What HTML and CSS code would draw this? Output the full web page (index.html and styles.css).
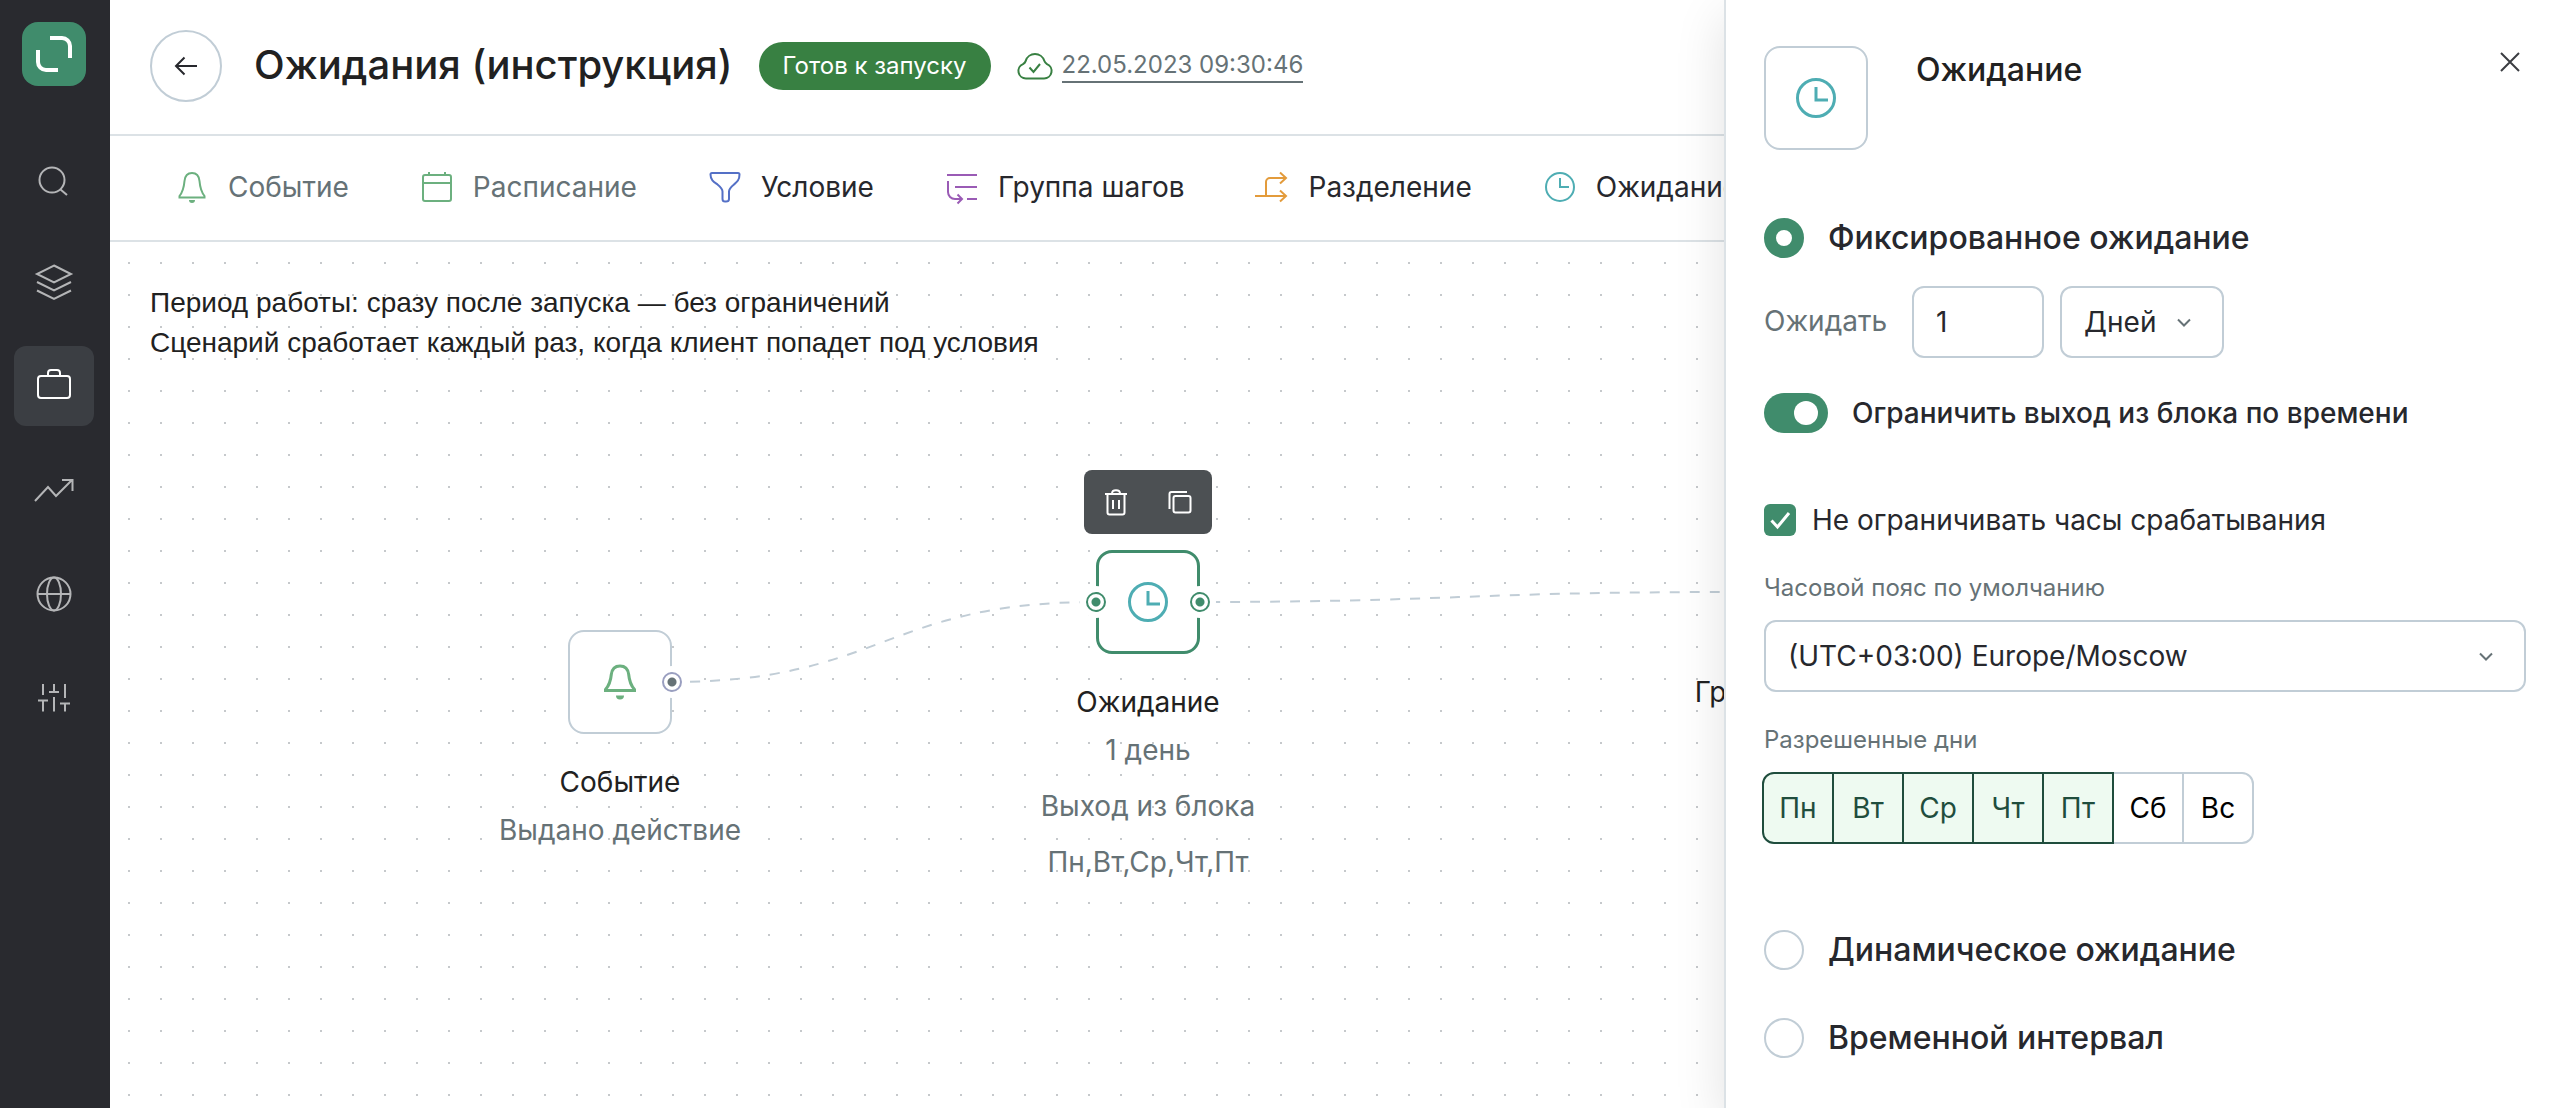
FILE: index.html
```html
<!DOCTYPE html>
<html lang="ru">
<head>
<meta charset="utf-8">
<title>Ожидания (инструкция)</title>
<link rel="stylesheet" href="styles.css">
</head>
<body>
<div class="app">
  <nav class="sidebar" aria-label="Главное меню">
    <a class="logo" href="#" aria-label="Главная">
      <svg width="64" height="64" viewBox="0 0 64 64" fill="none" stroke="currentColor" stroke-width="4"><path d="M28 16h12a8 8 0 0 1 8 8v12M16 28v12a8 8 0 0 0 8 8h12"/></svg>
    </a>
    <a class="nav-item" href="#" aria-label="Поиск">
      <svg class="nav-icon" viewBox="0 0 40 40"><circle cx="18" cy="22" r="12.5"/><path d="M26.500 31.500L33 37"/></svg>
    </a>
    <a class="nav-item" href="#" aria-label="Слои">
      <svg class="nav-icon" viewBox="0 0 40 40"><path d="M20 3.500L37 12L20 20.500L3 12ZM3 20L20 28.500L37 20M3 28.500L20 37L37 28.500"/></svg>
    </a>
    <a class="nav-item nav-item-active" href="#" aria-label="Кампании">
      <svg class="nav-icon" viewBox="0 0 40 40"><rect x="4" y="10" width="32" height="22" rx="3"/><path d="M14 10V7a3 3 0 0 1 3-3h6a3 3 0 0 1 3 3v3"/></svg>
    </a>
    <a class="nav-item" href="#" aria-label="Аналитика">
      <svg class="nav-icon" viewBox="0 0 40 40"><path d="M1 31L14 17L22 26L38 10M28 10h10.500v11"/></svg>
    </a>
    <a class="nav-item" href="#" aria-label="Сайт">
      <svg class="nav-icon" viewBox="0 0 40 40"><circle cx="20" cy="20" r="16.500"/><ellipse cx="20" cy="20" rx="7" ry="16.500"/><path d="M3.500 20h33"/></svg>
    </a>
    <a class="nav-item" href="#" aria-label="Настройки">
      <svg class="nav-icon" viewBox="0 0 40 40"><path d="M9 6v11M9 22.500v11M4 22.500h10M20 6v8M20 19v14.500M15 14h10M31 6v14M31 25.500v8M26 25.500h10"/></svg>
    </a>
  </nav>

  <main class="workspace">
    <header class="topbar">
      <button class="back" type="button" aria-label="Назад">
        <svg width="24" height="24" viewBox="0 0 24 24"><path d="M23 12H2M10.500 3.500L2 12L10.500 20.500"/></svg>
      </button>
      <h1 class="title">Ожидания (инструкция)</h1>
      <span class="status">Готов к запуску</span>
      <a class="saved" href="#">
        <svg width="36" height="32" viewBox="0 0 36 32"><path d="M9 28.500h18a7.500 7.500 0 0 0 3-14.400c-1.500-1-2.200-1.600-2.600-3a9.800 9.800 0 0 0-18.800 0c-.4 1.400-1 2-2.600 3A7.500 7.500 0 0 0 9 28.500z"/><path d="M12.500 17.500l4 4.500l6.500-8"/></svg>
        <time class="saved-time">22.05.2023 09:30:46</time>
      </a>
    </header>

    <div class="palette">
      <button class="block block-muted" type="button">
        <svg class="icon-green" viewBox="0 0 32 32"><path d="M16 2c5 0 7 3 7.500 8 .5 6 1 10 5 15v1.500h-25V25c4-5 4.500-9 5-15C9 5 11 2 16 2z"/><path class="solid" d="M13 29h6a3 3 0 0 1-6 0z"/></svg>
        Событие
      </button>
      <button class="block block-muted" type="button">
        <svg class="icon-green" viewBox="0 0 32 32"><rect x="2" y="4" width="28" height="26" rx="2"/><path d="M2 12h28M8 1v3M24 1v3"/></svg>
        Расписание
      </button>
      <button class="block" type="button">
        <svg class="icon-blue" viewBox="0 0 32 32"><path d="M3 2h26a1.500 1.500 0 0 1 1.500 1.500C30.500 9 28 11 25 13.500c-3 2.500-5 4.500-5 7V28c0 1.500-1.500 2.500-3 2.500h-1c-1.500 0-2.500-1-2.500-2.500v-7.500c0-2.500-2-4.500-5-7C5 11 1.500 9 1.500 3.500A1.500 1.500 0 0 1 3 2z"/></svg>
        Условие
      </button>
      <button class="block" type="button">
        <svg class="icon-purple" viewBox="0 0 32 32"><path d="M1 4h30M9 16h22M21 28h10M2 10v11a7 7 0 0 0 7 7h7M11.500 23.500L16 28l-4.500 4.500"/></svg>
        Группа шагов
      </button>
      <button class="block" type="button">
        <svg class="icon-orange" viewBox="0 0 32 32"><path d="M-2 25h31M9 25V11a4 4 0 0 1 4-4h16M23 1.500L29 7l-6 5.500M23 19.500L29 25l-6 5.500"/></svg>
        Разделение
      </button>
      <button class="block" type="button">
        <svg class="icon-teal" viewBox="0 0 32 32"><circle cx="16" cy="16" r="14"/><path d="M16 7v9h9"/></svg>
        Ожидание
      </button>
    </div>

    <section class="canvas">
      <p class="summary">Период работы: сразу после запуска — без ограничений<br>Сценарий сработает каждый раз, когда клиент попадет под условия</p>

      <svg class="links" width="1800" height="600" viewBox="0 0 1800 600"><path d="M560 440C772 440 774 360 986 360M1080 360C1350 360 1350 350 1626 350"/></svg>

      <article class="node node-event">
        <div class="node-box">
          <svg class="node-icon icon-green" viewBox="0 0 40 40"><path d="M20 4c5.500 0 8 3 8.700 8.500.6 6.500 1.800 10.500 5.800 15v1h-29v-1c4-4.500 5.200-8.500 5.800-15C12 7 14.500 4 20 4z"/><path class="solid" d="M16 33.500h8a4 4 0 0 1-8 0z"/></svg>
          <span class="port port-out"></span>
        </div>
        <h2 class="node-name">Событие</h2>
        <p class="node-note">Выдано действие</p>
      </article>

      <article class="node node-wait">
        <div class="node-tools">
          <button class="tool" type="button" aria-label="Удалить">
            <svg viewBox="0 0 32 32"><path d="M5 8h22M7.500 8v18.500a2 2 0 0 0 2 2h13a2 2 0 0 0 2-2V8M12 7.500c0-4.500 8-4.500 8 0M13 14v9M19 14v9"/></svg>
          </button>
          <button class="tool" type="button" aria-label="Копировать">
            <svg viewBox="0 0 32 32"><rect x="9.500" y="10" width="17" height="16.500" rx="2"/><path d="M5.500 23V8a2 2 0 0 1 2-2H23"/></svg>
          </button>
        </div>
        <div class="node-box node-box-active">
          <svg class="node-icon icon-teal" viewBox="0 0 40 40"><circle cx="20" cy="20" r="18.500"/><path d="M20 9v13h12"/></svg>
          <span class="port port-in port-active"></span>
          <span class="port port-out port-active"></span>
        </div>
        <h2 class="node-name">Ожидание</h2>
        <p class="node-note">1 день</p>
        <p class="node-note">Выход из блока</p>
        <p class="node-note">Пн,Вт,Ср,Чт,Пт</p>
      </article>

      <article class="node node-group">
        <div class="node-box">
          <svg class="node-icon icon-purple" viewBox="0 0 32 32"><path d="M1 4h30M9 16h22M21 28h10M2 10v11a7 7 0 0 0 7 7h7M11.500 23.500L16 28l-4.500 4.500"/></svg>
          <span class="port port-in"></span>
        </div>
        <h2 class="node-name">Группа шагов</h2>
      </article>
    </section>
  </main>

  <aside class="panel">
    <header class="panel-head">
      <div class="node-box">
        <svg class="node-icon icon-teal" viewBox="0 0 40 40"><circle cx="20" cy="20" r="18.500"/><path d="M20 9v13h12"/></svg>
      </div>
      <h2 class="panel-title">Ожидание</h2>
      <button class="close" type="button" aria-label="Закрыть">
        <svg width="20" height="20" viewBox="0 0 20 20"><path d="M1 1L19 19M19 1L1 19"/></svg>
      </button>
    </header>

    <form class="settings">
      <label class="choice"><input class="radio" type="radio" name="mode" checked>Фиксированное ожидание</label>

      <div class="wait-row">
        <label class="wait-label" for="amount">Ожидать</label>
        <input class="field amount" id="amount" type="text" value="1">
        <span class="select">
          <select class="field unit" aria-label="Единица времени"><option>Дней</option></select>
          <svg class="chevron" viewBox="0 0 16 10"><path d="M2 1.500l6 6l6-6"/></svg>
        </span>
      </div>

      <label class="limit"><input class="switch" type="checkbox" role="switch" checked>Ограничить выход из блока по времени</label>

      <label class="check-row">
        <span class="check-wrap"><input class="check" type="checkbox" checked><svg class="tick" viewBox="0 0 32 32"><path d="M7.500 16.500l6 6.500l11.500-14"/></svg></span>
        Не ограничивать часы срабатывания
      </label>

      <label class="caption" for="zone">Часовой пояс по умолчанию</label>
      <span class="select select-wide">
        <select class="field zone" id="zone"><option>(UTC+03:00) Europe/Moscow</option></select>
        <svg class="chevron" viewBox="0 0 16 10"><path d="M2 1.500l6 6l6-6"/></svg>
      </span>

      <fieldset class="days">
        <legend class="caption">Разрешенные дни</legend>
        <div class="day-list">
          <label class="day"><input class="day-input" type="checkbox" checked>Пн</label>
          <label class="day"><input class="day-input" type="checkbox" checked>Вт</label>
          <label class="day"><input class="day-input" type="checkbox" checked>Ср</label>
          <label class="day"><input class="day-input" type="checkbox" checked>Чт</label>
          <label class="day"><input class="day-input" type="checkbox" checked>Пт</label>
          <label class="day"><input class="day-input" type="checkbox">Сб</label>
          <label class="day"><input class="day-input" type="checkbox">Вс</label>
        </div>
      </fieldset>

      <label class="choice choice-next"><input class="radio" type="radio" name="mode">Динамическое ожидание</label>
      <label class="choice choice-next"><input class="radio" type="radio" name="mode">Временной интервал</label>
    </form>
  </aside>
</div>
</body>
</html>
```
FILE: styles.css
```css
:root {
  --green: #408c6c;
  --border: #c1cdd6;
  --line: #dce2e6;
  --text: #27282d;
  --muted: #667276;
}

* { box-sizing: border-box; }

body {
  margin: 0;
  font-family: Inter, "Liberation Sans", sans-serif;
  font-size: 28px;
  line-height: 40px;
  color: var(--text);
  background: #fff;
}

h1, h2, p { margin: 0; font-weight: 400; }
button, input, select { font: inherit; color: inherit; margin: 0; }
button { padding: 0; border: 0; background: none; cursor: pointer; }
svg { display: block; fill: none; stroke: currentColor; stroke-width: 2; overflow: visible; }
.solid { fill: currentColor; stroke: none; }

.icon-green { color: #6cb07f; }
.icon-blue { color: #5470c6; }
.icon-purple { color: #9a5bb5; }
.icon-orange { color: #e39b3b; }
.icon-teal { color: #4eadb3; }

.app {
  position: relative;
  display: flex;
  min-height: 100vh;
  overflow: hidden;
}

/* Sidebar */
.sidebar {
  flex: none;
  width: 110px;
  padding: 22px 16px 22px 14px;
  display: flex;
  flex-direction: column;
  align-items: center;
  gap: 24px;
  background: #292a2f;
}
.logo {
  margin-bottom: 28px;
  border-radius: 16px;
  background: var(--green);
  color: #fff;
}
.logo svg { stroke-width: 4; }
.nav-item {
  width: 80px;
  height: 80px;
  display: grid;
  place-items: center;
  border-radius: 12px;
  color: #b4b5b7;
}
.nav-item-active { background: #3b3e43; color: #fff; }
.nav-icon { width: 40px; height: 40px; }

/* Header */
.workspace {
  flex: 1;
  min-width: 0;
  display: flex;
  flex-direction: column;
}
.topbar {
  height: 136px;
  padding: 0 40px 2px;
  display: flex;
  align-items: center;
  border-bottom: 2px solid var(--line);
}
.back {
  flex: none;
  width: 72px;
  height: 72px;
  display: grid;
  place-items: center;
  border: 2px solid var(--border);
  border-radius: 50%;
}
.title {
  margin-left: 32px;
  padding-bottom: 2px;
  font-size: 40px;
  font-weight: 500;
  line-height: 48px;
  color: #212121;
}
.status {
  margin-left: 26px;
  padding: 4px 24px;
  border-radius: 24px;
  background: #388042;
  color: #fff;
  font-size: 24px;
}
.saved {
  margin-left: 26px;
  display: flex;
  align-items: center;
  gap: 9px;
  color: #388042;
  text-decoration: none;
}
.saved-time {
  border-bottom: 2px solid var(--muted);
  color: var(--muted);
  font-size: 24px;
  line-height: 32px;
}

/* Block palette */
.palette {
  height: 106px;
  padding: 0 66px 2px;
  display: flex;
  align-items: center;
  gap: 72px;
  border-bottom: 2px solid var(--line);
}
.block {
  flex: none;
  display: flex;
  align-items: center;
  gap: 20px;
}
.block svg { width: 32px; height: 32px; }
.block-muted { color: var(--muted); }

/* Canvas */
.canvas {
  position: relative;
  flex: 1;
  padding: 41px 40px;
  background-image: radial-gradient(circle, #c6c9cc 1px, transparent 1px);
  background-size: 32px 32px;
  background-position: 3px 5px;
}
.summary {
  font-family: "Liberation Sans", Arial, sans-serif;
  color: #212121;
}
.links {
  position: absolute;
  left: 0;
  top: 0;
  stroke: var(--border);
  stroke-dasharray: 10 10;
}
.node {
  position: absolute;
  width: 300px;
  display: flex;
  flex-direction: column;
  align-items: center;
  text-align: center;
}
.node-event { left: 360px; top: 388px; }
.node-wait { left: 888px; top: 228px; }
.node-group { left: 1528px; top: 298px; }
.node-box {
  position: relative;
  flex: none;
  width: 104px;
  height: 104px;
  display: grid;
  place-items: center;
  border: 2px solid var(--border);
  border-radius: 16px;
  background: #fff;
}
.node-box-active { border: 3px solid var(--green); }
.node-icon { width: 40px; height: 40px; stroke-width: 3; }
.port {
  position: absolute;
  top: 50%;
  width: 20px;
  height: 20px;
  margin: -10px;
  border: 2px solid #9a9fc0;
  border-radius: 50%;
  background: radial-gradient(circle, var(--muted) 4px, #fff 5px);
  box-shadow: 0 0 0 6px #fff;
}
.port-in { left: -2px; }
.port-out { right: -2px; }
.port-active {
  border-color: var(--green);
  background: radial-gradient(circle, var(--green) 4px, #fff 5px);
}
.port-in.port-active { left: -3px; }
.port-out.port-active { right: -3px; }
.node-name {
  margin-top: 28px;
  font-size: 28px;
  line-height: 40px;
  color: #212121;
}
.node-note {
  margin-top: 8px;
  color: var(--muted);
}
.node-note + .node-note { margin-top: 16px; }
.node-tools {
  margin-bottom: 16px;
  display: flex;
  border-radius: 8px;
  background: #4c5053;
  color: #fff;
}
.tool {
  width: 64px;
  height: 64px;
  display: grid;
  place-items: center;
}
.tool svg { width: 32px; height: 32px; }

/* Settings panel */
.panel {
  position: absolute;
  top: 0;
  right: 0;
  bottom: 0;
  width: 848px;
  padding: 46px 46px 46px 38px;
  border-left: 2px solid var(--line);
  background: #fff;
  box-shadow: 0 16px 48px rgba(0, 0, 0, 0.12);
}
.panel-head {
  display: flex;
  align-items: flex-start;
}
.panel-title {
  flex: 1;
  margin: 4px 0 0 48px;
  font-size: 32px;
  font-weight: 500;
  color: #212121;
}
.close { padding: 6px; color: #3b3d42; }
.settings {
  margin-top: 68px;
  display: flex;
  flex-direction: column;
}
.choice {
  display: flex;
  align-items: center;
  gap: 24px;
  font-size: 32px;
  font-weight: 500;
}
.choice-next { margin-top: 48px; }
.radio {
  appearance: none;
  width: 40px;
  height: 40px;
  border: 2px solid var(--border);
  border-radius: 50%;
  background: #fff;
}
.radio:checked { border: 12px solid var(--green); }
.wait-row {
  margin-top: 28px;
  display: flex;
  align-items: center;
  gap: 16px;
}
.wait-label {
  margin-right: 9px;
  padding-bottom: 2px;
  color: var(--muted);
}
.field {
  height: 72px;
  padding: 0 22px;
  border: 2px solid var(--border);
  border-radius: 12px;
  background: #fff;
  appearance: none;
}
.amount { width: 132px; }
.unit { width: 164px; }
.zone { width: 100%; }
.select { position: relative; display: flex; }
.chevron {
  position: absolute;
  top: 32px;
  right: 32px;
  width: 16px;
  height: 10px;
  color: var(--muted);
  pointer-events: none;
}
.limit {
  margin-top: 35px;
  display: flex;
  align-items: center;
  gap: 24px;
  font-weight: 500;
}
.switch {
  appearance: none;
  width: 64px;
  height: 40px;
  padding: 8px 10px;
  display: flex;
  justify-content: flex-end;
  border-radius: 20px;
  background: var(--green);
}
.switch::before {
  content: "";
  width: 24px;
  height: 24px;
  border-radius: 50%;
  background: #fff;
}
.check-row {
  margin-top: 67px;
  display: flex;
  align-items: center;
  gap: 16px;
}
.check-wrap { position: relative; display: flex; }
.check {
  appearance: none;
  width: 32px;
  height: 32px;
  border-radius: 6px;
  background: var(--green);
}
.tick {
  position: absolute;
  inset: 0;
  color: #fff;
  stroke-width: 3;
  pointer-events: none;
}
.caption {
  padding: 0;
  color: var(--muted);
  font-size: 24px;
  line-height: 32px;
}
.check-row + .caption { margin-top: 32px; }
.select-wide { margin-top: 16px; }
.days {
  min-width: 0;
  margin: 32px 0 38px;
  padding: 0;
  border: 0;
}
.day-list {
  margin: 16px 0 0 -2px;
  display: flex;
}
.day {
  width: 72px;
  height: 72px;
  margin-right: -2px;
  display: grid;
  place-items: center;
  border: 2px solid var(--border);
  color: #000;
}
.day:has(:checked) {
  z-index: 1;
  border-color: #1f4d3d;
  background: #eefaf1;
  color: #1f4d3d;
}
.day:first-child { border-radius: 12px 0 0 12px; }
.day:last-child { border-radius: 0 12px 12px 0; }
.day-input {
  position: absolute;
  opacity: 0;
  pointer-events: none;
}
```
